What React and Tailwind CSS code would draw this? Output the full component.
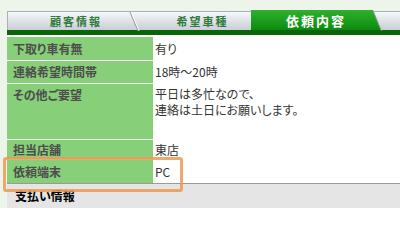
export default function App() {
  const rows = [
    { label: "下取り車有無", value: ["有り"], h: "h-[24px]" },
    { label: "連絡希望時間帯", value: ["18時〜20時"], h: "h-[23px]" },
    { label: "その他ご要望", value: ["平日は多忙なので、", "連絡は土日にお願いします。"], h: "h-[56px]", top: true },
    { label: "担当店舗", value: ["東店"], h: "h-[20px]" },
    { label: "依頼端末", value: ["PC"], h: "h-[23px]", last: true },
  ];
  return (
    <div className="relative w-[400px] h-[208px] overflow-hidden bg-[#edf5ea] pt-[11px] pl-[7px] font-['Noto_Sans_CJK_JP','Noto_Sans',sans-serif] [font-feature-settings:'palt']">
      <div className="relative flex h-[19px] border-t border-l border-[#a9b1ba] bg-linear-to-b from-[#f6f7f9] to-[#c9ced5]">
        <div className="w-[126px] pl-[10px] flex items-center justify-center text-[11px] leading-none font-bold tracking-[2px] text-[#2e7a3b]">
          顧客情報
        </div>
        <div className="w-[117px] pl-[20px] flex items-center justify-center text-[11px] leading-none font-bold tracking-[2px] text-[#2e7a3b]">
          希望車種
        </div>
        <div className="w-[130px] -mt-[2px] h-[20px] [clip-path:polygon(0_0,122px_0,130px_100%,0_100%)] bg-linear-to-b from-[#2db22d] to-[#0b8a0b] flex items-center justify-center text-[13px] leading-none font-bold tracking-[2px] text-white">
          依頼内容
        </div>
        <svg className="absolute left-0 top-0 pointer-events-none" width="393" height="19" viewBox="0 0 393 19">
          <line x1="122" y1="0" x2="130" y2="19" stroke="#8f98a2" strokeWidth="1" />
          <line x1="123.2" y1="0" x2="131.2" y2="19" stroke="#ffffff" strokeWidth="0.8" />
          <line x1="365.5" y1="0" x2="373.5" y2="19" stroke="#8fa08f" strokeWidth="1" />
        </svg>
      </div>
      <div className="h-[5px] bg-[#0a650a]" />
      <div className="h-[2px] bg-white" />
      <div className="flex flex-col">
        {rows.map((r) => (
          <div key={r.label} className={`grid grid-cols-[146px_1fr] ${r.h} ${r.last ? "" : "border-b border-white"}`}>
            <div className={`bg-[#88cf7a] pl-[6px] text-[12px] leading-[16px] font-bold text-[#4d4d4d] flex ${r.top ? "items-start pt-[3px]" : "items-center"}`}>
              {r.label}
            </div>
            <div className={`bg-white pl-[2px] text-[12px] leading-[16px] text-[#333333] flex flex-col ${r.top ? "justify-start pt-[2px]" : "justify-center"}`}>
              {r.value.map((v) => (
                <span key={v}>{v}</span>
              ))}
            </div>
          </div>
        ))}
      </div>
      <div className="h-[26px] bg-[#e5e5e5] border-t border-[#9a9a9a] pl-[8px] pt-[4px] text-[12px] leading-[16px] font-bold text-black">
        支払い情報
      </div>
      <div className="absolute left-[3px] top-[157px] w-[180px] h-[35px] border-[3px] border-[#ec9a52]/85 rounded-[3px]" />
    </div>
  );
}
